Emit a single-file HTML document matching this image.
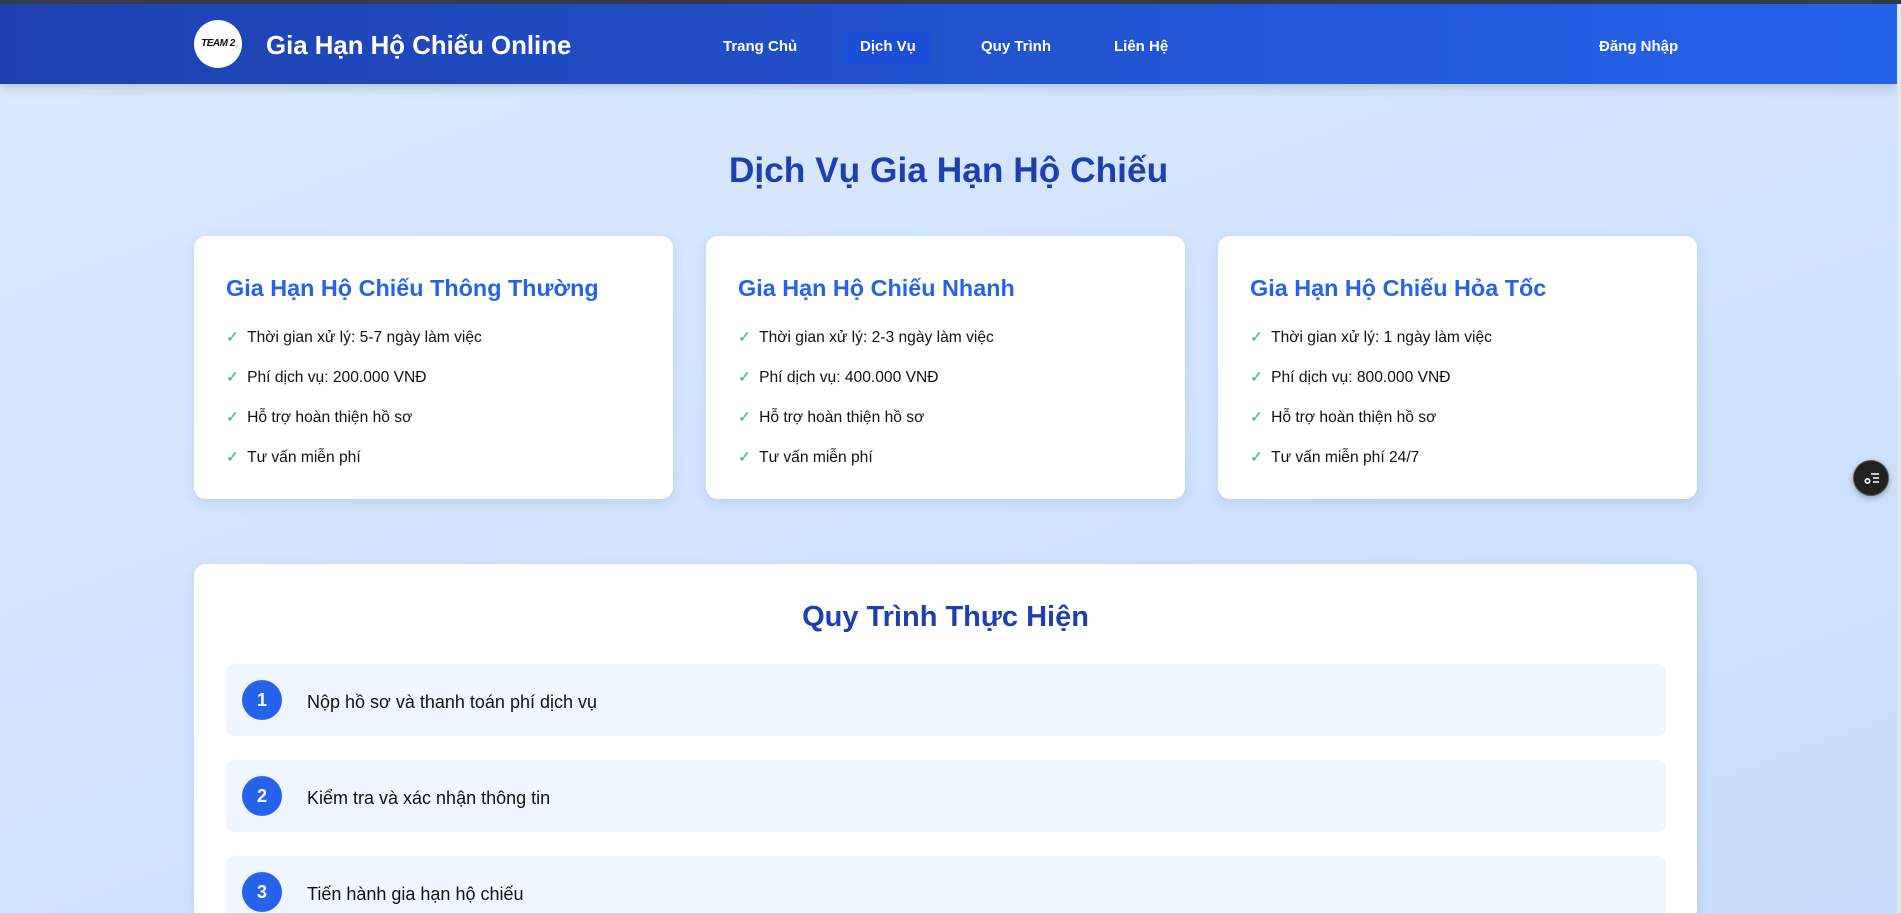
<!DOCTYPE html>
<html><head><meta charset="utf-8"><style>
*{margin:0;padding:0;box-sizing:border-box}
html,body{width:1901px;height:913px;overflow:hidden}
body{font-family:"Liberation Sans","DejaVu Sans",sans-serif;background:linear-gradient(160deg,#dbeafe 0%,#c7ddfb 100%);position:relative}
.topbar{position:absolute;left:0;top:0;width:1901px;height:4px;background:#363c4a}
.hdr{position:absolute;left:0;top:4px;width:1897px;height:80px;background:linear-gradient(90deg,#1e40af,#2563eb);box-shadow:0 4px 10px rgba(0,0,0,.15)}
.logo{position:absolute;left:194px;top:16px;width:48px;height:48px;border-radius:50%;background:#fff;color:#111;font:italic bold 10px "Liberation Sans",sans-serif;text-align:center;line-height:48px;letter-spacing:-0.5px}
.brand{position:absolute;left:266px;top:28px;color:#fff;font-weight:bold;font-size:25.8px}
.nav a{position:absolute;top:34px;color:#fff;font-weight:bold;font-size:15px;text-decoration:none}
.active{position:absolute;left:843px;top:27px;width:88px;height:34px;background:#1d4ed8;border-radius:6px}
.scroll{position:absolute;right:0;top:4px;width:4px;height:909px;background:#e5e7eb}
h1{position:absolute;left:0;width:1897px;top:151px;text-align:center;color:#1e40af;font-size:35.3px;font-weight:bold}
.card{position:absolute;top:236px;width:479px;height:263px;background:#fff;border-radius:12px;box-shadow:0 4px 12px rgba(30,64,175,.12);padding:39px 32px}
.card h3{color:#2563eb;font-size:23.4px;font-weight:bold;margin-bottom:16px}
.card li{list-style:none;font-size:15.6px;color:#111;height:40px;line-height:40px}
.card li span{color:#22c55e;margin-right:8px}
.sec{position:absolute;left:194px;top:564px;width:1503px;height:349px;background:#fff;border-radius:12px 12px 0 0;box-shadow:0 4px 12px rgba(30,64,175,.12)}
.sec h2{position:absolute;left:0;width:100%;top:37px;text-align:center;color:#1e40af;font-size:29px;font-weight:bold}
.step{position:absolute;left:32px;width:1440px;height:72px;background:#eff6ff;border-radius:8px}
.step .n{position:absolute;left:16px;top:16px;width:40px;height:40px;border-radius:50%;background:#2563eb;color:#fff;font-weight:bold;font-size:18px;text-align:center;line-height:40px}
.step .t{position:absolute;left:81px;top:28px;font-size:18px;color:#111}
.fab{position:absolute;left:1853px;top:460px;width:36px;height:36px;border-radius:50%;background:#222;border:1.5px solid #555;box-shadow:0 2px 6px rgba(0,0,0,.3)}
</style></head><body>
<div class="topbar"></div>
<div class="hdr">
<div class="logo">TEAM 2</div>
<div class="brand">Gia Hạn Hộ Chiếu Online</div>
<div class="active"></div>
<div class="nav">
<a style="left:723px">Trang Chủ</a>
<a style="left:860px">Dịch Vụ</a>
<a style="left:981px">Quy Trình</a>
<a style="left:1114px">Liên Hệ</a>
<a style="left:1599px">Đăng Nhập</a>
</div>
</div>
<div class="scroll"></div>
<h1>Dịch Vụ Gia Hạn Hộ Chiếu</h1>
<div class="card" style="left:194px"><h3>Gia Hạn Hộ Chiếu Thông Thường</h3><ul>
<li><span>✓</span>Thời gian xử lý: 5-7 ngày làm việc</li><li><span>✓</span>Phí dịch vụ: 200.000 VNĐ</li><li><span>✓</span>Hỗ trợ hoàn thiện hồ sơ</li><li><span>✓</span>Tư vấn miễn phí</li></ul></div>
<div class="card" style="left:706px"><h3>Gia Hạn Hộ Chiếu Nhanh</h3><ul>
<li><span>✓</span>Thời gian xử lý: 2-3 ngày làm việc</li><li><span>✓</span>Phí dịch vụ: 400.000 VNĐ</li><li><span>✓</span>Hỗ trợ hoàn thiện hồ sơ</li><li><span>✓</span>Tư vấn miễn phí</li></ul></div>
<div class="card" style="left:1218px"><h3>Gia Hạn Hộ Chiếu Hỏa Tốc</h3><ul>
<li><span>✓</span>Thời gian xử lý: 1 ngày làm việc</li><li><span>✓</span>Phí dịch vụ: 800.000 VNĐ</li><li><span>✓</span>Hỗ trợ hoàn thiện hồ sơ</li><li><span>✓</span>Tư vấn miễn phí 24/7</li></ul></div>
<div class="sec"><h2>Quy Trình Thực Hiện</h2>
<div class="step" style="top:100px"><div class="n">1</div><div class="t">Nộp hồ sơ và thanh toán phí dịch vụ</div></div>
<div class="step" style="top:196px"><div class="n">2</div><div class="t">Kiểm tra và xác nhận thông tin</div></div>
<div class="step" style="top:292px;height:57px;border-radius:8px 8px 0 0"><div class="n">3</div><div class="t">Tiến hành gia hạn hộ chiếu</div></div>
</div>
<div class="fab"><svg width="36" height="36" viewBox="0 0 36 36"><g stroke="#fff" stroke-width="1.6" fill="none"><path d="M17 13h8M19 17h6M19 21h6"/><circle cx="13.5" cy="20" r="2.2"/></g></svg></div>
</body></html>
